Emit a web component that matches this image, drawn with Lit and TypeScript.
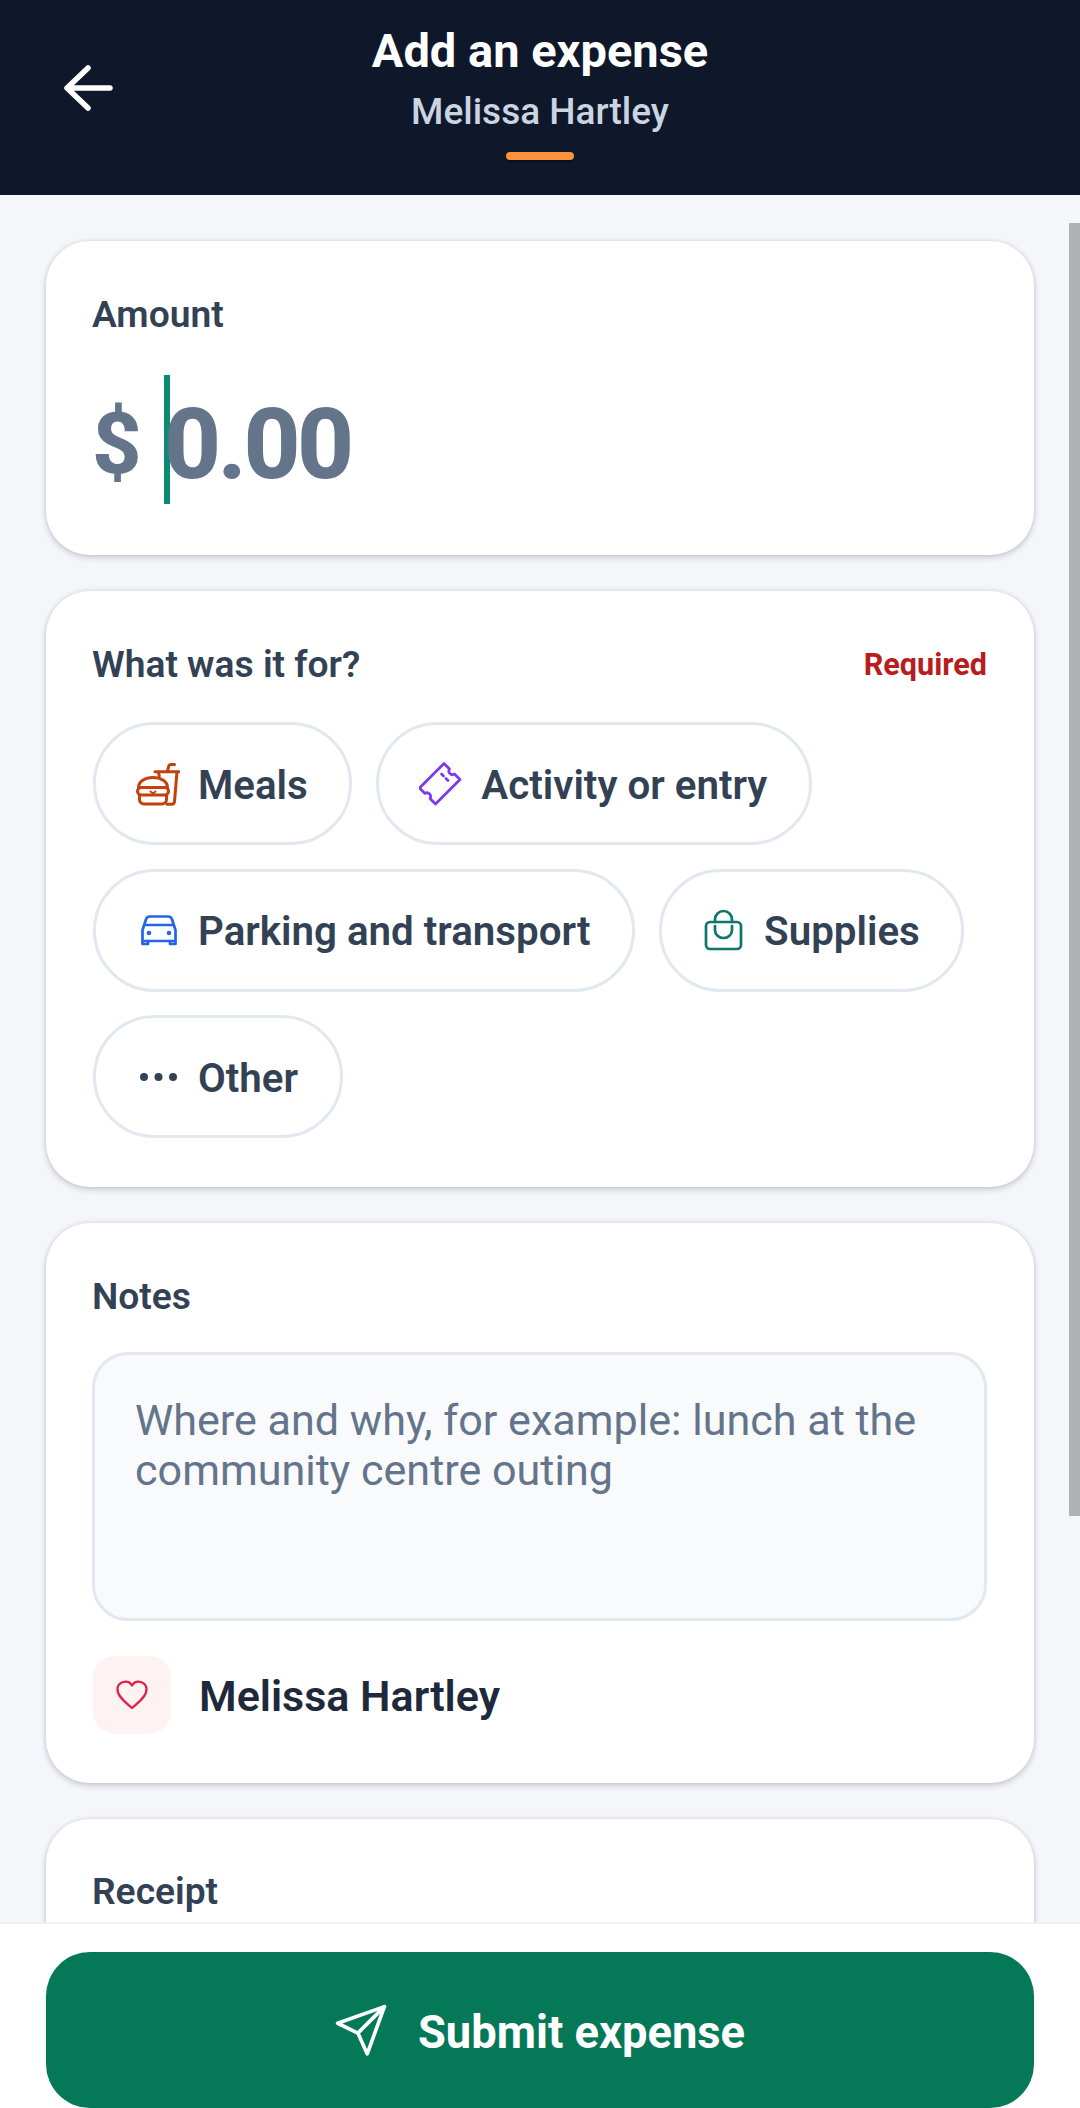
import { LitElement, html, css } from "lit";
import { customElement } from "lit/decorators.js";

const burger = html`<svg viewBox="0 0 44 44" fill="none" stroke="#c2410c" stroke-width="3" stroke-linecap="round" stroke-linejoin="round">
  <path d="M2.500 25.500C2.500 19.500 9 15.500 17 15.500S31.500 19.500 31.500 25.500Z"/>
  <rect x="1.500" y="25.500" width="31" height="7.500" rx="3.700"/>
  <path d="M14.500 29.500l2.500 2 2.500-2" stroke-width="2"/>
  <path d="M3.500 33.500V37.500a4.500 4.500 0 0 0 4.500 4.500H26a4.500 4.500 0 0 0 4.500-4.500V33.500"/>
  <path d="M19 9.700H43M22.300 9.700l1 4.500M41 9.700L38.500 39.500a3 3 0 0 1-3 2.700H31"/>
  <path d="M31.300 9.700l1.500-5.700a2 2 0 0 1 2-1.500H38.500"/>
</svg>`;
const ticket = html`<svg viewBox="0 0 44 44" fill="none" stroke="#7c3aed" stroke-width="2.700" stroke-linecap="round" stroke-linejoin="round">
  <path d="M25 1.500L30.500 7a3.600 3.600 0 0 0 5 5L41 17.500 16.500 42 11 36.500a3.600 3.600 0 0 0-5-5L.5 26Z"/>
  <path d="M22.500 12l2 2M27 16.500l2 2"/>
</svg>`;
const car = html`<svg viewBox="0 0 44 44" fill="none" stroke="#2563eb" stroke-width="2.700" stroke-linecap="round" stroke-linejoin="round">
  <path d="M6.500 33V22L10 11.500A4 4 0 0 1 14 8.500H32A4 4 0 0 1 36 11.500L39.500 22V33M8.500 17H37.500M6.500 33H39.500"/>
  <path d="M6.500 33v3h5.500v-3M34 33v3h5.500v-3"/>
  <circle cx="13" cy="25" r="2.300" fill="#2563eb" stroke="none"/>
  <circle cx="33" cy="25" r="2.300" fill="#2563eb" stroke="none"/>
</svg>`;
const bag = html`<svg viewBox="0 0 44 44" fill="none" stroke="#0f766e" stroke-width="2.700" stroke-linecap="round" stroke-linejoin="round">
  <rect x="4" y="14" width="35" height="27" rx="4"/>
  <path d="M13 14V11.500a8.500 8.500 0 0 1 17 0V14"/>
  <path d="M13 18v4a8.500 8 0 0 0 17 0v-4"/>
</svg>`;
const dots = html`<svg viewBox="0 0 44 44" fill="#334155">
  <circle cx="8" cy="22" r="4"/><circle cx="22.500" cy="22" r="4"/><circle cx="37" cy="22" r="4"/>
</svg>`;
const heart = html`<svg viewBox="0 0 32 32" fill="none" stroke="#e11d48" stroke-width="2.200" stroke-linecap="round" stroke-linejoin="round">
  <path d="M16 29C11 24.500 1.500 18 1.500 10.500A7.800 7.800 0 0 1 16 6.500 7.800 7.800 0 0 1 30.500 10.500C30.500 18 21 24.500 16 29Z"/>
</svg>`;
const send = html`<svg viewBox="0 0 50 50" fill="none" stroke="#fff" stroke-width="3.500" stroke-linecap="round" stroke-linejoin="round">
  <path d="M47.500 2.500L2.500 18.500 22 28 31 48Z"/><path d="M47.500 2.500L22 28"/>
</svg>`;
const back = html`<svg viewBox="0 0 50 46" fill="none" stroke="#fff" stroke-width="5.500" stroke-linecap="round" stroke-linejoin="round">
  <path d="M24 3L3 23 24 43M3 23H46"/>
</svg>`;

const chips: [string, unknown][] = [
  ["Meals", burger],
  ["Activity or entry", ticket],
  ["Parking and transport", car],
  ["Supplies", bag],
  ["Other", dots],
];

@customElement("app-root")
export class AppRoot extends LitElement {
  static styles = css`
    :host {
      display: flex;
      flex-direction: column;
      position: relative;
      width: 1080px;
      height: 2108px;
      overflow: hidden;
      background: #f4f6fa;
      font-family: Roboto, "Liberation Sans", sans-serif;
      color: #334155;
    }
    .header {
      flex: none;
      height: 195px;
      box-sizing: border-box;
      background: #0f172a;
      display: grid;
      grid-template-columns: 1fr auto 1fr;
      align-items: start;
      padding: 0 44px;
    }
    .back {
      width: 50px;
      height: 46px;
      margin: 65px 0 0 20px;
    }
    .back svg { display: block; width: 50px; height: 46px; }
    .head-mid {
      display: flex;
      flex-direction: column;
      align-items: center;
      padding-top: 22px;
    }
    .title { color: #fff; font-size: 47px; line-height: 58px; font-weight: 700; }
    .sub { color: #cbd5e1; font-size: 37px; line-height: 46px; font-weight: 500; margin-top: 9px; }
    .accent {
      width: 68px;
      height: 8px;
      border-radius: 4px;
      background: #fb923c;
      margin-top: 17px;
      box-shadow: 0 2px 2px rgba(0, 0, 0, 0.35);
    }
    .scroll {
      flex: 1;
      min-height: 0;
      overflow: hidden;
      padding: 46px 46px 0 46px;
      display: flex;
      flex-direction: column;
      gap: 36px;
    }
    .card {
      flex: none;
      box-sizing: border-box;
      background: #fff;
      border-radius: 44px;
      padding: 51px 47px 0 46px;
      box-shadow: 0 3px 6px rgba(15, 23, 42, 0.15), 0 0 5px rgba(15, 23, 42, 0.12);
    }
    .label { font-size: 37.200px; line-height: 44px; font-weight: 600; color: #334155; }
    .amount-card { height: 314px; }
    .amount {
      display: flex;
      align-items: center;
      margin-top: 38px;
      height: 130px;
      font-size: 99px;
      font-weight: 800;
      letter-spacing: -3.500px;
      color: #64748b;
    }
    .dollar { width: 71px; font-size: 86px; letter-spacing: 0; padding-top: 8px; }
    .caret { width: 6px; height: 129px; background: #0d8a72; margin-left: 1px; margin-right: -6px; }
    .digits { padding-top: 10px; }
    .for-card { height: 596px; }
    .row { display: flex; justify-content: space-between; align-items: center; }
    .req { font-size: 30.600px; font-weight: 700; color: #b91c1c; }
    .chips { display: flex; flex-wrap: wrap; gap: 23.500px 24px; margin: 36px 0 0 1px; }
    .chip {
      display: flex;
      align-items: center;
      gap: 18px;
      height: 123px;
      box-sizing: border-box;
      padding: 0 41.500px 0 40px;
      border: 3px solid #e2e8f0;
      border-radius: 62px;
      font-size: 40.300px;
      font-weight: 600;
      color: #334155;
    }
    .chip span { padding-top: 3px; }
    .chip svg { width: 44px; height: 44px; display: block; }
    .notes-card { height: 560px; }
    .box {
      margin-top: 34px;
      height: 269px;
      box-sizing: border-box;
      background: #f8fafc;
      border: 3px solid #e2e8f0;
      border-radius: 36px;
      padding: 41px 40px 0;
      font-size: 43.100px;
      line-height: 50px;
      color: #64748b;
    }
    .person { display: flex; align-items: center; gap: 28px; margin: 35px 0 0 1px; }
    .tile {
      width: 78px;
      height: 78px;
      border-radius: 22px;
      background: #fef2f2;
      display: flex;
      align-items: center;
      justify-content: center;
    }
    .tile svg { width: 32px; height: 32px; display: block; }
    .name { font-size: 43px; font-weight: 600; color: #1e293b; padding-top: 2px; }
    .receipt-card { height: 300px; padding-top: 50px; }
    .footer {
      flex: none;
      background: #fff;
      border-top: 2px solid #eef1f5;
      padding: 28px 46px 0;
    }
    .submit {
      height: 156px;
      border-radius: 44px;
      background: #057857;
      display: flex;
      align-items: center;
      justify-content: center;
      gap: 31px;
      color: #fff;
      font-size: 45.300px;
      font-weight: 700;
    }
    .submit span { padding-top: 4px; }
    .submit svg { width: 52px; height: 52px; display: block; }
    .scrollbar {
      position: absolute;
      right: 0;
      top: 223px;
      width: 11px;
      height: 1293px;
      background: #b0b1b5;
    }
  `;

  render() {
    return html`
      <div class="header">
        <div class="back">${back}</div>
        <div class="head-mid">
          <div class="title">Add an expense</div>
          <div class="sub">Melissa Hartley</div>
          <div class="accent"></div>
        </div>
        <div></div>
      </div>
      <div class="scroll">
        <div class="card amount-card">
          <div class="label">Amount</div>
          <div class="amount">
            <span class="dollar">$</span><span class="caret"></span><span class="digits">0.00</span>
          </div>
        </div>
        <div class="card for-card">
          <div class="row"><div class="label">What was it for?</div><div class="req">Required</div></div>
          <div class="chips">
            ${chips.map(([t, i]) => html`<div class="chip">${i}<span>${t}</span></div>`)}
          </div>
        </div>
        <div class="card notes-card">
          <div class="label">Notes</div>
          <div class="box">Where and why, for example: lunch at the community centre outing</div>
          <div class="person">
            <div class="tile">${heart}</div>
            <div class="name">Melissa Hartley</div>
          </div>
        </div>
        <div class="card receipt-card"><div class="label">Receipt</div></div>
      </div>
      <div class="footer">
        <div class="submit">${send}<span>Submit expense</span></div>
      </div>
      <div class="scrollbar"></div>
    `;
  }
}
